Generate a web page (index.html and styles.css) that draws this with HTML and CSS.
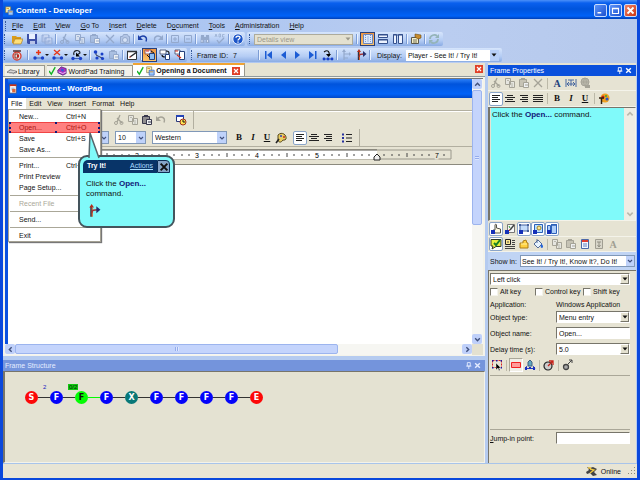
FILE: index.html
```html
<!DOCTYPE html>
<html lang="en">
<head>
<meta charset="utf-8">
<title>Content - Developer</title>
<link rel="stylesheet" href="styles.css">
</head>
<body>
<svg class="sprite" aria-hidden="true">
<defs>
<symbol id="open" viewBox="0 0 12 12"><path d="M1 3h4l1 1h4v2H4L2 10H1z" fill="#d99c1c"/><path d="M4 6h8l-2 5H2z" fill="#ffe07a" stroke="#a87410" stroke-width=".6"/></symbol>
<symbol id="save" viewBox="0 0 12 12"><path d="M1 1h10v10H2l-1-1z" fill="#3c50a8"/><path d="M3 1h6v5H3z" fill="#e8f0ff"/><path d="M4 8h5v3H4z" fill="#b8c4e8"/></symbol>
<symbol id="saveall" viewBox="0 0 12 12"><path d="M1 2h7v7H1zM4 5h7v6H4z" fill="#b4c6ea" stroke="#8fa8d4" stroke-width=".8"/><path d="M3 3h4M6 6h4" stroke="#dbe6fa"/></symbol>
<symbol id="cut" viewBox="0 0 12 12"><path d="M7 1L4 8M4 4l5 5" fill="none" stroke="currentColor" stroke-width="1.3"/><circle cx="3" cy="9" r="1.5" fill="none" stroke="currentColor"/><circle cx="8.500" cy="9" r="1.500" fill="none" stroke="currentColor"/></symbol>
<symbol id="copy" viewBox="0 0 12 12"><path d="M1.500 1.500h5v6h-5zM5.500 4.500h5v6h-5z" fill="#e6e8ea" fill-opacity=".6" stroke="currentColor"/><path d="M7 7h2M7 9h2M3 3.500h2" stroke="currentColor" stroke-width=".7"/></symbol>
<symbol id="paste" viewBox="0 0 12 12"><path d="M1.500 2.500h7v7h-7z" fill="currentColor" fill-opacity=".5" stroke="currentColor"/><path d="M3 1h4v2H3z" fill="currentColor"/><path d="M5.500 5.500h5v5h-5z" fill="#eef0f2" stroke="currentColor"/><path d="M7 8h3" stroke="currentColor"/></symbol>
<symbol id="del" viewBox="0 0 12 12"><path d="M2 2l8 8M10 2l-8 8" stroke="currentColor" stroke-width="1.300"/></symbol>
<symbol id="camera" viewBox="0 0 12 12"><path d="M1.500 3.500h2l1-2h4l1 2h1v7h-9z" fill="#b4c6e6" stroke="currentColor"/><circle cx="6" cy="7" r="2.500" fill="#d5e2f6" stroke="currentColor"/></symbol>
<symbol id="undo" viewBox="0 0 12 12"><path d="M2 5.500C5 1 11 3 9 8.500" fill="none" stroke="currentColor" stroke-width="1.400"/><path d="M1 2v5h5z" fill="currentColor"/></symbol>
<symbol id="redo" viewBox="0 0 12 12"><path d="M10 5.500C7 1 1 3 3 8.500" fill="none" stroke="currentColor" stroke-width="1.400"/><path d="M11 2v5H6z" fill="currentColor"/></symbol>
<symbol id="plus" viewBox="0 0 12 12"><path d="M2.500 2.500h7v7h-7zM4 6h4M6 4v4" fill="none" stroke="currentColor"/></symbol>
<symbol id="minus" viewBox="0 0 12 12"><path d="M2.500 2.500h7v7h-7zM4 6h4" fill="none" stroke="currentColor"/></symbol>
<symbol id="find" viewBox="0 0 12 12"><path d="M2 2h3l.5 8h-4zM7 2h3l.5 8h-4zM5 4h2v3H5z" fill="currentColor"/><path d="M3 7v2M8.500 7v2" stroke="#d8e4f8"/></symbol>
<symbol id="spell" viewBox="0 0 12 12"><path d="M1 4l1-3 1 3M5 1v3h1.500V1zM10.500 1.500h-2V4h2" fill="none" stroke="currentColor" stroke-width=".7"/><path d="M3 7l2 3 5-5" fill="none" stroke="currentColor" stroke-width="1.300"/></symbol>
<symbol id="help" viewBox="0 0 12 12"><circle cx="6" cy="6" r="5.200" fill="#1e56c8" stroke="#e6eefc"/><path d="M4 4.800C4 2.500 8 2.500 8 4.600 8 6 6 6 6 7.500M6 8.500v1.200" fill="none" stroke="#fff" stroke-width="1.300"/></symbol>
<symbol id="lay1" viewBox="0 0 12 12"><path d="M1.500 1.500h9v9h-9z" fill="#dce9fb" stroke="#6c86bc"/><path d="M3.500 2v8M8.500 2v8" stroke="#7c98d0" stroke-dasharray="1 1"/><path d="M5 4h2M5 6h2M5 8h2" stroke="#9cb4e0"/></symbol>
<symbol id="lay2" viewBox="0 0 12 12"><path d="M1.500 1.500h9v3h-9zM1.500 6.500h9v4h-9z" fill="#edf3ff" stroke="#34508c"/><path d="M1 2h10M1 7h10" stroke="#34508c"/></symbol>
<symbol id="lay3" viewBox="0 0 12 12"><path d="M1.500 1.500h3v9h-3zM6.500 1.500h4v9h-4z" fill="#edf3ff" stroke="#34508c"/><path d="M1 2h10" stroke="#34508c"/></symbol>
<symbol id="props" viewBox="0 0 12 12"><path d="M1.500 4.500h7v6h-7z" fill="#f4efc9" stroke="#5b594c"/><path d="M3 7h4M3 9h4" stroke="#77745c"/><path d="M5 1l6 1v3l-3 1-3-2z" fill="#c78c2c" stroke="#6e4a10" stroke-width=".6"/></symbol>
<symbol id="refresh" viewBox="0 0 12 12"><path d="M2 6c0-4 5-5 7-3M10 6c0 4-5 5-7 3" fill="none" stroke="#94b4b8" stroke-width="1.800"/><path d="M11 1v4H7zM1 11V7h4z" fill="#94b4b8"/></symbol>
<symbol id="record" viewBox="0 0 12 12"><circle cx="6" cy="7" r="4" fill="#f4dcd8" stroke="#d43c30" stroke-width="1.300"/><path d="M2 2h8" stroke="#5a302c" stroke-width="1.500"/><path d="M4 5h3v4H4z" fill="none" stroke="#7a302c"/><circle cx="7" cy="7" r="1.200" fill="#c41c14"/></symbol>
<symbol id="nodeadd" viewBox="0 0 12 12"><path d="M2 9h8" stroke="#3c64b4"/><circle cx="2" cy="9" r="1.700" fill="#1940c8"/><circle cx="9.500" cy="9" r="1.700" fill="#1940c8"/><path d="M5.500 1v5M3 3.500h5" stroke="#e83414" stroke-width="1.500"/></symbol>
<symbol id="nodedel" viewBox="0 0 12 12"><path d="M2 9h8" stroke="#3c64b4"/><circle cx="2" cy="9" r="1.700" fill="#1940c8"/><circle cx="9.500" cy="9" r="1.700" fill="#1940c8"/><path d="M2 1l6 5M8 1L2 6" stroke="#e83414" stroke-width="1.300"/></symbol>
<symbol id="nodeturn" viewBox="0 0 12 12"><path d="M2 9.500h8" stroke="#3c64b4"/><circle cx="2" cy="9.500" r="1.700" fill="#1940c8"/><circle cx="9.500" cy="9.500" r="1.700" fill="#1940c8"/><path d="M3 6C1 1 9 0 9 4L6 6" fill="none" stroke="#20252c" stroke-width="1.200"/><path d="M5 3.500v4h4z"/></symbol>
<symbol id="nodes" viewBox="0 0 12 12"><path d="M3 3v3l6 3" fill="none" stroke="#303a58"/><circle cx="2.500" cy="3" r="1.800" fill="#1940c8"/><circle cx="9" cy="5" r="1.500" fill="#1940c8"/><circle cx="4" cy="9" r="1.600" fill="#1940c8"/><circle cx="9.500" cy="9.500" r="1.600" fill="#1940c8"/></symbol>
<symbol id="edit" viewBox="0 0 12 12"><path d="M1.500 2.500h9v8h-9z" fill="#fff" stroke="#303438"/><path d="M1 2.500h10" stroke="#303438" stroke-width="1.500"/><path d="M11 3L4 8" stroke="#22262e" stroke-width="1.500"/><path d="M3 9l1-2 1 1z" fill="#d83020"/></symbol>
<symbol id="frames" viewBox="0 0 12 12"><path d="M1 1h6v4H1z" fill="#f2f4ff" stroke="#803c30" stroke-width=".8"/><path d="M5.500 4.500h5v6h-5z" fill="#8bbdf4" stroke="#25407c"/><path d="M3 6l3 3M7 2l3 2" stroke="#111"/><path d="M2 2h3" stroke="#e83020"/></symbol>
<symbol id="frames2" viewBox="0 0 12 12"><path d="M1 1h6v4H1z" fill="#fff" stroke="#3c4868" stroke-width=".8"/><path d="M6.500 5.500h4v5h-4z" fill="#fff" stroke="#25407c"/><path d="M7 2c3 0 3 1 3 3M3 6c0 2 1 2 3 2" fill="none" stroke="#111" stroke-width="1.200"/></symbol>
<symbol id="frames3" viewBox="0 0 12 12"><path d="M1 1h5v4H1z" fill="#fff" stroke="#3c4868" stroke-width=".8"/><path d="M5.500 2.500h5v8h-5z" fill="#fff" stroke="#25407c"/><path d="M3 6l4 3M1 2h3" stroke="#d8301c" stroke-width="1.200"/></symbol>
<symbol id="first" viewBox="0 0 12 12"><path d="M3 2h1.500v8H3zM10 2v8L5 6z" fill="#1c5cd4"/></symbol>
<symbol id="prev" viewBox="0 0 12 12"><path d="M9 2v8L4 6z" fill="#1c5cd4"/></symbol>
<symbol id="next" viewBox="0 0 12 12"><path d="M3 2v8l5-4z" fill="#1c5cd4"/></symbol>
<symbol id="last" viewBox="0 0 12 12"><path d="M8 2h1.500v8H8zM2 2v8l5-4z" fill="#1c5cd4"/></symbol>
<symbol id="jump" viewBox="0 0 12 12"><path d="M2 3c4-3 6 0 5 4" fill="none" stroke="#111" stroke-width="1.200"/><path d="M4 5h5L6.500 8z"/><path d="M1 10h10" stroke="#3c64b4"/><circle cx="2" cy="10" r="1.400" fill="#1940c8"/><circle cx="6" cy="10" r="1.400" fill="#1940c8"/><circle cx="10" cy="10" r="1.400" fill="#1940c8"/></symbol>
<symbol id="branch" viewBox="0 0 12 12"><path d="M4 11V2M4 5h6M4 9h4" fill="none" stroke="currentColor" stroke-width="1.200"/><path d="M4 0l2 3H2zM9 3l2 2-2 2z" fill="currentColor"/></symbol>
<symbol id="branch2" viewBox="0 0 12 12"><path d="M3.500 11V2" stroke="#303040" stroke-width="1.400"/><path d="M4.500 11V3" stroke="#d8602c"/><path d="M4 8c0-3 2-3 5-3" fill="none" stroke="#a03030" stroke-width="1.300"/><path d="M4 0l2 3H2z" fill="#b42c1c"/><path d="M8 2l3.500 3L8 8z" fill="#25306c"/></symbol>
<symbol id="book" viewBox="0 0 12 12"><path d="M1 5l4-4 6 2v6l-4 2-6-3z" fill="#b42cc0" stroke="#402868" stroke-width=".8"/><path d="M2 7l5 2 4-2" fill="none" stroke="#e8e0ff"/><path d="M5 3l3 1v3L5 6z" fill="#3060d4"/></symbol>
<symbol id="lib" viewBox="0 0 12 12"><path d="M0 7l4-3 8 2v2L8 10 0 8z" fill="#6c6c6c"/><path d="M1 7l3-2 7 1-3 2z" fill="#d5d5d5"/><path d="M1 8l7 1.500L11 8" stroke="#fff" fill="none" stroke-width=".7"/></symbol>
<symbol id="tick" viewBox="2 0 9 12"><path d="M2 6l3 4 5-9" fill="none" stroke="#18b428" stroke-width="1.800"/></symbol>
<symbol id="docicon" viewBox="0 0 12 12"><path d="M2 1h6v7H2z" fill="#fff4b0" stroke="#7c7448" stroke-width=".8"/><path d="M5 5h6v6H5z" fill="#9ccaff" stroke="#2050a8" stroke-width=".8"/><path d="M3 3h3M6 7h4" stroke="#d48c20"/></symbol>
<symbol id="pad" viewBox="0 0 12 12"><path d="M2 1h8v10H2z" fill="#fff" stroke="#3c5080"/><path d="M2 1.500h8" stroke="#c83018" stroke-width="2"/><path d="M4 5h4M4 7h4" stroke="#6884bc"/><path d="M5 6h4v4H5z" fill="#e06834"/></symbol>
<symbol id="clock" viewBox="0 0 12 12"><path d="M1.500 1.500h7v6h-7z" fill="#fff" stroke="#28387c"/><path d="M1 2h8" stroke="#2444b8" stroke-width="2"/><circle cx="8" cy="8" r="3" fill="#ffe450" stroke="#a0301c"/><path d="M8 6v2h2" fill="none" stroke="#111"/></symbol>
<symbol id="left" viewBox="0 0 12 12"><path d="M2 2.500h8M2 4.500h6M2 6.500h8M2 8.500h6" stroke="#222"/></symbol>
<symbol id="center" viewBox="0 0 12 12"><path d="M3 2.500h6M1 4.500h10M3 6.500h6M1 8.500h10" stroke="#222"/></symbol>
<symbol id="right" viewBox="0 0 12 12"><path d="M2 2.500h8M4 4.500h6M2 6.500h8M4 8.500h6" stroke="#222"/></symbol>
<symbol id="justify" viewBox="0 0 12 12"><path d="M1 2.500h10M1 4.500h10M1 6.500h10M1 8.500h10" stroke="#222"/></symbol>
<symbol id="bullets" viewBox="0 0 12 12"><path d="M5 2.500h6M5 6h6M5 9.500h6" stroke="#222"/><path d="M1 1.500h2v2H1zM1 5h2v2H1zM1 8.500h2v2H1z" fill="#2430a0"/></symbol>
<symbol id="palette" viewBox="0 0 12 12"><path d="M3 3C7-1 12 3 11 7c-1 2-3 0-4 2s-4 1-4-1z" fill="#e8cc60" stroke="#55481c"/><circle cx="6" cy="4" r="1" fill="#2c40c0"/><circle cx="9" cy="5" r="1" fill="#c82c20"/><path d="M1 11l3-4" stroke="#222" stroke-width="1.500"/></symbol>
<symbol id="globe" viewBox="0 0 12 12"><circle cx="6" cy="5" r="4" fill="#b8b6aa" stroke="currentColor"/><path d="M2 5h8M6 1c-2 3-2 5 0 8 2-3 2-5 0-8" fill="none" stroke="currentColor" stroke-width=".7"/><path d="M6 8h5v3H6z" fill="currentColor"/></symbol>
<symbol id="spacing" viewBox="0 0 12 12"><path d="M1 2v8M11 2v8M3 3h6M6 3v6M2 7h8M4 5L2 7l2 2M8 5l2 2-2 2" fill="none" stroke="#4868a0"/></symbol>
<symbol id="fun" viewBox="0 0 12 12"><circle cx="7" cy="5" r="4.500" fill="#f0a020"/><circle cx="5" cy="4" r="1.500" fill="#c82018"/><circle cx="9" cy="6" r="1.500" fill="#2858cc"/><circle cx="8" cy="3" r="1" fill="#38a830"/><path d="M1 5h5M3.500 5v6" stroke="#302010" stroke-width="1.500"/></symbol>
<symbol id="hand" viewBox="0 0 12 12"><path d="M5 7V2c0-1 1.500-1 1.500 0v3l4 1v4H5L3 7z" fill="#fffbe0" stroke="#55544c"/><path d="M1 7h4v4H1z" fill="#1430b8"/></symbol>
<symbol id="pen" viewBox="0 0 12 12"><path d="M3.500 1.500h7v8h-7z" fill="#f8f8f8" stroke="#777"/><path d="M10 2L6 7" stroke="#444" stroke-width="1.500"/><path d="M4 8l2-2v2z" fill="#d03c20"/><path d="M5 3l1 2" stroke="#30a030"/><path d="M1 7h4v4H1z" fill="#1430b8"/></symbol>
<symbol id="bubble" viewBox="0 0 12 12"><path d="M2 2h8v6H2z" fill="#c4dcfa" stroke="#44609c"/><path d="M1 1h2v2H1zM9 1h2v2H9zM9 7h2v2H9z" fill="#44609c"/><path d="M1 7h4v4H1z" fill="#1430b8"/></symbol>
<symbol id="view" viewBox="0 0 12 12"><path d="M2.500 1.500h8v8h-8z" fill="#b8e0ff" stroke="#2c60b8"/><circle cx="7" cy="5" r="2" fill="#ffe890" stroke="#a08028"/><path d="M1 7h4v4H1z" fill="#1430b8"/></symbol>
<symbol id="window" viewBox="0 0 12 12"><path d="M1.500 2.500h3v5h-3zM5.500 1.500h5v9h-5z" fill="#b0cef8" stroke="#2c60b8"/><path d="M5 2h6" stroke="#2c60b8" stroke-width="1.500"/><path d="M1 7h4v4H1z" fill="#1430b8"/></symbol>
<symbol id="say" viewBox="0 0 12 12"><path d="M1 1.500h10v7H6L2 11l1-3H1z" fill="#e8f03c" stroke="#303c28"/><path d="M4 5l2 2 4-5" fill="none" stroke="#168028" stroke-width="2"/></symbol>
<symbol id="text" viewBox="0 0 12 12"><path d="M1.500 1.500h5v5h-5z" fill="#ffe890" stroke="#222"/><path d="M3 4h2M8 2.500h3M8 4.500h3M8 6.500h3M1 8.500h10M1 10.500h10" stroke="#444"/></symbol>
<symbol id="folder" viewBox="0 0 12 12"><path d="M2 5h3V3l3-1 1 3h1v5H2z" fill="#ffd040" stroke="#ac7c18"/><path d="M3 6h6" stroke="#fff0a0"/></symbol>
<symbol id="fill" viewBox="0 0 12 12"><path d="M2 6l4-4 4 4-4 4z" fill="#e8f4ff" stroke="#546c98"/><path d="M9 6c3 1 2 4 1 4S8 9 9 6z" fill="#2464d8"/><path d="M5 5V1" stroke="#546c98"/></symbol>
<symbol id="sheet" viewBox="0 0 12 12"><path d="M2.500 1.500h7v9h-7z" fill="#f5f7ff" stroke="#4c68a8"/><path d="M3 3h6" stroke="#e03c30" stroke-width="2"/><path d="M4 6h4M4 8h4" stroke="#6080c0"/></symbol>
<symbol id="graysheet" viewBox="0 0 12 12"><path d="M2.500 1.500h7v9h-7z" fill="#d8d6ca" stroke="#a09e92"/><path d="M4 4h4M6 4v5M4.500 7L6 9l1.500-2" fill="none" stroke="#929084"/></symbol>
<symbol id="areasel" viewBox="0 0 12 12"><path d="M1.500 1.500h9v7h-9z" fill="none" stroke="#d82020" stroke-dasharray="2 1"/><path d="M1 1h1.500v1.500H1zM5 1h1.500v1.500H5zM9.500 1H11v1.500H9.500zM1 8h1.500v1.500H1zM9.500 8H11v1.500H9.500z" fill="#1818a0"/><path d="M5 4v7l2-2 1 3 1-1-1-2h2z" stroke="#fff" stroke-width=".4"/></symbol>
<symbol id="redbox" viewBox="0 0 12 12"><path d="M1.500 3.500h9v5h-9z" fill="#ff9c98" stroke="#f02020"/></symbol>
<symbol id="mouse" viewBox="0 0 12 12"><path d="M4 7V3l2-2 2 2v4z" fill="#60a8c0" stroke="#406080"/><path d="M1.500 9.500h9M3 7L1 10M9 7l2 3" stroke="#2440b8"/><path d="M1 8h2v3H1zM9 8h2v3H9zM5 8h2v2H5z" fill="#1c30c0"/></symbol>
<symbol id="target" viewBox="0 0 12 12"><circle cx="5" cy="7" r="4" fill="#ccc" stroke="#222" stroke-width="1.200"/><path d="M5 7l5-5M6 2h4v4" fill="none" stroke="#c82018" stroke-width="1.300"/></symbol>
<symbol id="sound" viewBox="0 0 12 12"><circle cx="4" cy="8" r="2.500" fill="#aaa" stroke="#444" stroke-width="1.300"/><path d="M6 5l4-4M7 1h3v3" fill="none" stroke="#444"/></symbol>
<symbol id="plug" viewBox="0 0 12 12"><path d="M1 2l3 1 3-1 4 2-3 3 3 3-4 1-3-3-3 1-1-2 3-2z" fill="#444"/><path d="M4 4l4 1-4 3M2 3h3" fill="none" stroke="#f0c840" stroke-width="1.300"/></symbol>
<symbol id="x" viewBox="0 0 12 12"><path d="M2 2l8 8M10 2l-8 8" stroke="currentColor" stroke-width="2.400"/></symbol>
<symbol id="pin" viewBox="0 0 12 12"><path d="M4 1h5v6H4zM2 7h9M6.500 7v5" fill="none" stroke="currentColor" stroke-width="1.500"/></symbol>
<symbol id="down" viewBox="0 0 12 12"><path d="M1 3h10L6 9z" fill="currentColor"/></symbol>
<symbol id="chev" viewBox="0 0 12 12"><path d="M2 4l4 4 4-4" fill="none" stroke="currentColor" stroke-width="2.400"/></symbol>
</defs>
</svg>

<div class="window">
<header class="titlebar">
  <svg class="ic"><use href="#docicon"/></svg>
  <h1>Content - Developer</h1>
  <button class="cap" aria-label="Minimize"><svg viewBox="0 0 12 12"><path d="M2 9h5" stroke="#fff" stroke-width="2"/></svg></button>
  <button class="cap" aria-label="Maximize"><svg viewBox="0 0 12 12"><path d="M2 3h8v7H2zM2 3.500h8" fill="none" stroke="#fff" stroke-width="1.500"/></svg></button>
  <button class="cap close" aria-label="Close"><svg><use href="#x"/></svg></button>
</header>

<div class="chrome">
  <nav class="menubar grip">
    <a href="#"><u>F</u>ile</a><a href="#"><u>E</u>dit</a><a href="#"><u>V</u>iew</a><a href="#"><u>G</u>o To</a><a href="#"><u>I</u>nsert</a><a href="#"><u>D</u>elete</a><a href="#">D<u>o</u>cument</a><a href="#"><u>T</u>ools</a><a href="#"><u>A</u>dministration</a><a href="#"><u>H</u>elp</a>
  </nav>
  <div class="bars">
    <div class="bar grip">
      <button aria-label="Open"><svg><use href="#open"/></svg></button><button aria-label="Save"><svg><use href="#save"/></svg></button><button class="dim" aria-label="Save all"><svg><use href="#saveall"/></svg></button><i class="sep"></i>
      <button class="dim" aria-label="Cut"><svg><use href="#cut"/></svg></button><button class="dim" aria-label="Copy"><svg><use href="#copy"/></svg></button><button class="dim" aria-label="Paste"><svg><use href="#paste"/></svg></button><button class="dim" aria-label="Delete"><svg><use href="#del"/></svg></button><button class="dim" aria-label="Capture"><svg><use href="#camera"/></svg></button><i class="sep"></i>
      <button class="blue" aria-label="Undo"><svg><use href="#undo"/></svg></button><button class="dim" aria-label="Redo"><svg><use href="#redo"/></svg></button><i class="sep"></i>
      <button class="dim slim" aria-label="Expand"><svg><use href="#plus"/></svg></button><button class="dim slim" aria-label="Collapse"><svg><use href="#minus"/></svg></button><i class="sep"></i>
      <button class="dim" aria-label="Find"><svg><use href="#find"/></svg></button><button class="dim" aria-label="Spelling"><svg><use href="#spell"/></svg></button><i class="sep"></i>
      <button aria-label="Help"><svg><use href="#help"/></svg></button>
    </div>
    <div class="bar grip second">
      <div class="combo details"><select aria-label="View mode" disabled><option>Details view</option></select><span><svg><use href="#down"/></svg></span></div><i class="sep wide"></i>
      <button class="hot" aria-label="Standard layout"><svg><use href="#lay1"/></svg></button><button aria-label="Stacked layout"><svg><use href="#lay2"/></svg></button><button aria-label="Side layout"><svg><use href="#lay3"/></svg></button><i class="sep"></i>
      <button aria-label="Properties"><svg><use href="#props"/></svg></button><i class="sep"></i>
      <button class="dim" aria-label="Refresh"><svg><use href="#refresh"/></svg></button>
    </div>
  </div>
  <div class="bars">
    <div class="bar grip">
      <button aria-label="Record"><svg><use href="#record"/></svg></button><i class="sep wide"></i>
      <button class="drop" aria-label="Insert frame"><svg><use href="#nodeadd"/></svg><b></b></button><button class="drop" aria-label="Delete frame"><svg><use href="#nodedel"/></svg><b></b></button><button class="drop" aria-label="Recapture"><svg><use href="#nodeturn"/></svg><b></b></button><i class="sep"></i>
      <button aria-label="Insert nodes"><svg><use href="#nodes"/></svg></button><button class="dim" aria-label="Paste frame"><svg><use href="#paste"/></svg></button><i class="sep"></i>
      <button aria-label="Edit screenshot"><svg><use href="#edit"/></svg></button><i class="sep"></i>
      <button class="hot" aria-label="Link bubble"><svg><use href="#frames"/></svg></button><button aria-label="Link action"><svg><use href="#frames2"/></svg></button><button aria-label="Unlink"><svg><use href="#frames3"/></svg></button>
    </div>
    <div class="bar grip nav">
      <span class="fid">Frame ID:</span><output>7</output><i class="sep"></i>
      <button aria-label="First frame"><svg><use href="#first"/></svg></button><button aria-label="Previous frame"><svg><use href="#prev"/></svg></button><button aria-label="Next frame"><svg><use href="#next"/></svg></button><button aria-label="Last frame"><svg><use href="#last"/></svg></button><button aria-label="Jump to frame"><svg><use href="#jump"/></svg></button><i class="sep"></i>
      <button class="dim" aria-label="Previous path"><svg><use href="#branch"/></svg></button><button aria-label="Next path"><svg><use href="#branch2"/></svg></button><i class="sep"></i>
      <label for="display">Display:</label>
      <div class="combo display"><select id="display"><option>Player - See It! / Try It!</option></select><span><svg><use href="#down"/></svg></span></div>
    </div>
  </div>
</div>

<main class="work">
  <div class="leftcol">
    <nav class="tabs">
      <a href="#" class="tab lib"><svg><use href="#lib"/></svg>Library</a>
      <a href="#" class="tab"><svg class="tick"><use href="#tick"/></svg><svg><use href="#book"/></svg>WordPad Training</a>
      <a href="#" class="tab on"><svg class="tick"><use href="#tick"/></svg><svg><use href="#docicon"/></svg>Opening a Document<span class="red"><svg><use href="#x"/></svg></span></a>
      <button class="red end" aria-label="Close tab"><svg><use href="#x"/></svg></button>
    </nav>
    <section class="canvas">
      <div class="canvasrow">
        <div class="wordpad">
          <div class="wptitle"><svg class="ic"><use href="#pad"/></svg>Document - WordPad</div>
          <nav class="wpmenu"><a href="#" class="on">File</a><a href="#">Edit</a><a href="#">View</a><a href="#">Insert</a><a href="#">Format</a><a href="#">Help</a></nav>
          <div class="wpbar">
            <button class="gray" aria-label="Cut"><svg><use href="#cut"/></svg></button><button class="gray" aria-label="Copy"><svg><use href="#copy"/></svg></button><button class="dark" aria-label="Paste"><svg><use href="#paste"/></svg></button><button class="gray" aria-label="Undo"><svg><use href="#undo"/></svg></button><button class="date" aria-label="Date and time"><svg><use href="#clock"/></svg></button><i class="edge"></i>
          </div>
          <div class="wpfmt">
            <div class="combo xp font"><select aria-label="Font"><option></option></select><span><svg><use href="#chev"/></svg></span></div>
            <div class="combo xp size"><select aria-label="Font size"><option>10</option></select><span><svg><use href="#chev"/></svg></span></div>
            <div class="combo xp script"><select aria-label="Font script"><option>Western</option></select><span><svg><use href="#chev"/></svg></span></div>
            <div class="tools"><button class="ltr"><b>B</b></button><button class="ltr"><b><em>I</em></b></button><button class="ltr"><b><u>U</u></b></button><button aria-label="Color"><svg><use href="#palette"/></svg></button></div>
            <div class="tools"><button class="press" aria-label="Align left"><svg><use href="#left"/></svg></button><button aria-label="Center"><svg><use href="#center"/></svg></button><button aria-label="Align right"><svg><use href="#right"/></svg></button></div>
            <button aria-label="Bullets"><svg><use href="#bullets"/></svg></button><i class="edge"></i>
          </div>
          <div class="ruler">
            <svg width="444" height="14">
              <defs><pattern id="ticks" width="60" height="14" x="9" patternUnits="userSpaceOnUse"><path d="M7 6v2M15 6v2M22 6v2M30 5v4M37 6v2M45 6v2M52 6v2" stroke="#444"/></pattern></defs>
              <path d="M9 2h434v9H9z" fill="#e6e3d3" stroke="#9a988c"/><path d="M9 2h360v9H9z" fill="#fff"/><path d="M9 2h360" stroke="#55534a"/>
              <path d="M9 0h430v14H9z" fill="url(#ticks)"/>
              <text x="129" y="10">2</text><text x="189" y="10">3</text><text x="249" y="10">4</text><text x="309" y="10">5</text><text x="429" y="10">7</text>
              <path d="M366 12V9l3-3 3 3v3z" fill="#eee" stroke="#222"/>
            </svg>
          </div>
          <div class="page"></div>

          <div class="filemenu">
            <a href="#">New...<span>Ctrl+N</span></a>
            <a href="#" class="sel">Open...<span>Ctrl+O</span><i class="h1"></i><i class="h2"></i><i class="h3"></i><i class="h4"></i><i class="h5"></i><i class="h6"></i><i class="h7"></i><i class="h8"></i></a>
            <a href="#">Save<span>Ctrl+S</span></a>
            <a href="#">Save As...</a><hr>
            <a href="#">Print...<span>Ctrl+P</span></a>
            <a href="#">Print Preview</a>
            <a href="#">Page Setup...</a><hr>
            <a href="#" class="off">Recent File</a><hr>
            <a href="#">Send...</a><hr>
            <a href="#">Exit</a>
          </div>
          <div class="callout">
            <svg class="tail" viewBox="0 0 14 27"><path d="M2 26L3 1l9 25" fill="#80fafa" stroke="#55656c" stroke-width="1.500"/></svg>
            <div class="cohead"><div><strong>Try It!</strong><a href="#">Actions</a></div><button aria-label="Close bubble"><svg><use href="#x"/></svg></button></div>
            <p>Click the <b>Open...</b><br>command.</p>
            <svg class="co"><use href="#branch2"/></svg>
          </div>
        </div>
        <div class="vscroll"><button aria-label="Scroll up"><svg class="up"><use href="#chev"/></svg></button><div class="thumb"></div><div class="track"></div><button aria-label="Scroll down"><svg><use href="#chev"/></svg></button></div>
      </div>
      <div class="hscroll"><button aria-label="Scroll left"><svg class="lt"><use href="#chev"/></svg></button><div class="thumb"></div><div class="track"></div><button aria-label="Scroll right"><svg class="rt"><use href="#chev"/></svg></button><div class="corner"></div></div>
    </section>
    <section class="structure">
      <h2 class="head inactive">Frame Structure<svg><use href="#pin"/></svg><svg><use href="#x"/></svg></h2>
      <div class="struct">
        <ol class="nodes">
          <li class="end">S</li><li>F<sup>2</sup></li><li class="cur">F<sup>0/2</sup></li><li class="green">F</li><li class="x">X</li><li>F</li><li>F</li><li>F</li><li>F</li><li class="end">E</li>
        </ol>
      </div>
    </section>
  </div>

  <aside class="props">
    <h2 class="head">Frame Properties<svg><use href="#pin"/></svg><svg><use href="#x"/></svg></h2>
    <div class="ptool">
      <button class="gray" aria-label="Cut"><svg><use href="#cut"/></svg></button><button class="gray" aria-label="Copy"><svg><use href="#copy"/></svg></button><button class="gray" aria-label="Paste"><svg><use href="#paste"/></svg></button><button class="gray" aria-label="Delete"><svg><use href="#del"/></svg></button><i class="psep"></i><button class="ltr font"><b>A</b></button><button aria-label="Text width"><svg><use href="#spacing"/></svg></button><button class="gray" aria-label="Hyperlink"><svg><use href="#globe"/></svg></button>
    </div>
    <div class="ptool tall">
      <button class="press" aria-label="Align left"><svg><use href="#left"/></svg></button><button aria-label="Center"><svg><use href="#center"/></svg></button><button aria-label="Align right"><svg><use href="#right"/></svg></button><button aria-label="Justify"><svg><use href="#justify"/></svg></button><i class="psep"></i><button class="ltr"><b>B</b></button><button class="ltr"><b><em>I</em></b></button><button class="ltr"><b><u>U</u></b></button><i class="psep"></i><button aria-label="Text effects"><svg><use href="#fun"/></svg></button>
    </div>
    <div class="editor">
      <div class="text" contenteditable="true" role="textbox" aria-label="Bubble text">Click the <b>Open...</b> command.</div>
      <div class="escroll"><svg class="up"><use href="#chev"/></svg><svg><use href="#chev"/></svg></div>
    </div>
    <div class="ptool tall">
      <button class="press" aria-label="Action text"><svg><use href="#hand"/></svg></button><button aria-label="Custom text"><svg><use href="#pen"/></svg></button><button class="press" aria-label="Template text"><svg><use href="#bubble"/></svg></button><button class="press" aria-label="Show text"><svg><use href="#view"/></svg></button><button class="press" aria-label="Window text"><svg><use href="#window"/></svg></button>
    </div>
    <div class="ptool">
      <button class="press" aria-label="Bubble"><svg><use href="#say"/></svg></button><button aria-label="Bubble position"><svg><use href="#text"/></svg></button><button aria-label="Bubble pointer"><svg><use href="#folder"/></svg></button><button aria-label="Fill color"><svg><use href="#fill"/></svg></button><i class="psep"></i><button class="gray" aria-label="Copy bubble"><svg><use href="#copy"/></svg></button><button class="gray" aria-label="Bubble options"><svg><use href="#paste"/></svg></button><button aria-label="Note"><svg><use href="#sheet"/></svg></button><button aria-label="Import"><svg><use href="#graysheet"/></svg></button><button class="ltr gray font"><b>A</b></button>
    </div>
    <div class="showin"><label for="show">Show in:</label><div class="combo xp"><select id="show"><option>See It! / Try It!, Know It?, Do It!</option></select><span><svg><use href="#chev"/></svg></span></div></div>
    <form class="form">
      <div class="combo classic"><select aria-label="Action"><option>Left click</option></select><span><svg><use href="#down"/></svg></span></div>
      <div class="checks"><label><input type="checkbox">Alt key</label><label><input type="checkbox">Control key</label><label><input type="checkbox">Shift key</label></div>
      <div class="row app"><span>Application:</span><span>Windows Application</span></div>
      <div class="row"><label for="otype">Object type:</label><div class="combo classic"><select id="otype"><option>Menu entry</option></select><span><svg><use href="#down"/></svg></span></div></div>
      <div class="row mid"><label for="oname">Object name:</label><input id="oname" type="text" value="Open..."></div>
      <div class="row"><label for="delay">Delay time (s):</label><div class="combo classic"><select id="delay"><option>5.0</option></select><span><svg><use href="#down"/></svg></span></div></div>
      <div class="acts"><button type="button" aria-label="Action area"><svg><use href="#areasel"/></svg></button><i class="psep"></i><button type="button" class="sunk" aria-label="Show area"><svg><use href="#redbox"/></svg></button><button type="button" aria-label="Mouse path"><svg><use href="#mouse"/></svg></button><i class="psep"></i><button type="button" aria-label="Show action"><svg><use href="#target"/></svg></button><i class="psep"></i><button type="button" aria-label="Drag"><svg><use href="#sound"/></svg></button></div>
      <div class="space"></div>
      <div class="row jump"><label for="jump-in"><u>J</u>ump-in point:</label><input id="jump-in" type="text"></div>
    </form>
  </aside>
</main>
<footer class="status"><svg class="ic"><use href="#plug"/></svg><span>Online</span><svg class="sizer" viewBox="0 0 8 8"><path d="M6 0h1v1H6zM3 3h1v1H3zM6 3h1v1H6zM0 6h1v1H0zM3 6h1v1H3zM6 6h1v1H6z" fill="#8c8a78"/></svg></footer>
</div>
</body>
</html>
```
FILE: styles.css
```css
* { box-sizing: border-box; }
html, body { height: 100%; }
body {
  margin: 0;
  font: 7px/9px "Liberation Sans", sans-serif;
  color: #111;
}
a { color: inherit; text-decoration: none; }
u { text-decoration-thickness: 1px; text-underline-offset: 1px; }
h1, h2, p, ol { margin: 0; padding: 0; font: inherit; }
button, input, select { font: inherit; color: inherit; margin: 0; }
button {
  display: flex;
  flex: none;
  align-items: center;
  justify-content: center;
  padding: 0;
  border: 0;
  background: none;
}
svg { display: block; flex: none; width: 12px; height: 12px; }
.sprite { position: absolute; width: 0; height: 0; }

.window {
  display: flex;
  flex-direction: column;
  min-height: 100%;
  border: solid #0a48dc;
  border-width: 0 3px 2px;
  background: #b5cbf0;
}
.titlebar {
  display: flex;
  align-items: center;
  gap: 2px;
  height: 19px;
  padding: 2px 0 0 1px;
  background: linear-gradient(#4c90f8 0, #0a60ee 3px, #0054dc 9px, #0062f8 16px, #0040b8);
  color: #fff;
}
.titlebar .ic { width: 10px; height: 10px; }
h1 { flex: 1; font: bold 8px/10px "Liberation Sans", sans-serif; }
.cap {
  width: 13px;
  height: 13px;
  border: 1px solid #c8dcff;
  border-radius: 2px;
  background: linear-gradient(135deg, #5c94f8, #1c50d0);
}
.cap.close { background: linear-gradient(135deg, #f08468, #cc3410); }
.cap svg { width: 9px; height: 9px; }

.chrome { padding: 0 2px 0 1px; background: linear-gradient(90deg, #a2c0f2, #bacdf0 70%, #b6c9ec); height: 44px; }
.grip::before {
  content: "";
  width: 1px;
  height: 10px;
  flex: none;
  border-left: 1px dotted #34589c;
  margin-right: 3px;
}
.menubar { display: flex; align-items: center; height: 13px; padding-left: 1px; }
.menubar a { margin-right: 10px; }
.menubar a:first-of-type { margin-left: 2px; }
.bars { display: flex; margin-bottom: 1px; height: 15px; }
.bar {
  display: flex;
  align-items: center;
  height: 14px;
  border-radius: 2px;
  background: linear-gradient(#d6e5fc, #b4ccf4 60%, #8aace4);
}
.bar button { width: 15px; height: 14px; color: #333; }
.bar .slim { width: 13px; }
.bar .dim { color: #94a9cc; }
.bar .blue { color: #1c40a8; }
.bar .hot { height: 14px; border: 1px solid #28407c; background: linear-gradient(#ee9440, #fcc468); }
.sep { width: 1px; height: 10px; margin: 0 1px; background: #7c9cd4; box-shadow: 1px 0 #eaf2ff; flex: none; }
.sep.wide { margin: 0 3px; }
.bar.second { margin-left: 2px; padding: 0 2px; }
.bar .drop { width: 19px; }
.drop b { border: 2px solid transparent; border-top-color: #111; border-bottom: 0; }
.fid { width: 36px; margin-left: 1px; }
output { width: 24px; }
.bar.nav { margin-left: 3px; padding: 0 3px 0 1px; }
.nav label { margin: 0 4px 0 6px; }

.combo { display: flex; height: 11px; background: #fff; }
.combo select {
  flex: 1;
  min-width: 0;
  appearance: none;
  border: 0;
  padding: 0 2px;
  background: none;
  border-radius: 0;
}
.combo span { display: flex; align-items: center; justify-content: center; width: 9px; background: #b8d0f8; }
.combo span svg { width: 6px; height: 6px; }
.combo.details { width: 99px; border: 1px solid #adab9c; background: #e4e1d0; color: #9a988a; }
.combo.details select { color: #9a988a; opacity: 1; }
.combo.details span { background: none; }
.combo.display { width: 93px; }
.combo.xp { border: 1px solid #8098b8; }
.combo.xp span { background: #bfd2fa; color: #40507c; }
.combo.classic { height: 12px; border: 1px solid; border-color: #77756a #fff #fff #77756a; }
.combo.classic span { background: #e4e1d0; border: 1px solid; border-color: #fff #77756a #77756a #fff; }

.work { display: flex; flex: 1; gap: 3px; }
.leftcol { flex: 1; min-width: 0; display: flex; flex-direction: column; }
.tabs {
  display: flex;
  align-items: flex-end;
  height: 14px;
  padding: 2px 0 0 2px;
  background: #e6e3d2;
  border-bottom: 1px solid #8e9aa0;
}
.tab {
  display: flex;
  align-items: center;
  gap: 1px;
  height: 11px;
  padding: 0 8px 0 2px;
  margin-right: 2px;
  border: solid #9a988c;
  border-width: 1px 1px 0 0;
  background: #f2f1ea;
}
.tab svg { width: 10px; height: 10px; }
.tab .tick { width: 7px; }
.tab.lib { padding-right: 5px; }
.tab.on { height: 13px; margin-left: -2px; padding: 0 4px; border-top: 2px solid #f0a434; background: #fff; font-weight: bold; }
.red {
  display: flex;
  align-items: center;
  justify-content: center;
  width: 8px;
  height: 8px;
  margin-left: 4px;
  background: #e04028;
  color: #fff;
}
.red svg { width: 6px; height: 6px; }
.red.end { margin: 0 2px 3px auto; }

.canvas { flex: 1; display: flex; flex-direction: column; border: solid #f4f3ea; border-width: 1px 2px; background: #e4e1d0; }
.canvasrow { flex: 1; display: flex; border-top: 1px solid #777; }
.wordpad {
  position: relative;
  flex: 1;
  display: flex;
  flex-direction: column;
  border-left: 3px solid #0a50e0;
  background: #e6e3d3;
}
.wptitle {
  display: flex;
  align-items: center;
  gap: 3px;
  height: 19px;
  color: #fff;
  font-size: 8px;
  font-weight: bold;
  background: linear-gradient(#2c80f8, #0054dc 5px, #0062f8 15px, #0048c8);
}
.wptitle .ic { width: 10px; height: 10px; }
.wpmenu { display: flex; height: 12px; }
.wpmenu a { padding: 1px 3px; }
.wpmenu .on { background: #fff; padding-right: 4px; }
.wpbar { display: flex; align-items: center; height: 19px; padding-left: 104px; border-top: 1px solid #b2afa0; box-shadow: inset 0 1px #fff; }
.wpbar button { width: 14px; height: 14px; }
.gray { color: #a5a397; }
.dark { color: #38384c; }
.wpbar .date { margin-left: 6px; }
.edge { align-self: stretch; width: 1px; margin-left: 5px; background: #b2afa0; }
.wpfmt { display: flex; align-items: center; height: 18px; border-bottom: 1px solid #b2afa0; }
.wpfmt button { width: 14px; height: 14px; }
.wpfmt .combo { height: 13px; }
.wpfmt .font { width: 101px; margin-right: 6px; }
.wpfmt .size { width: 31px; margin-right: 6px; }
.wpfmt .script { width: 75px; margin-right: 5px; }
.tools { display: flex; margin-right: 5px; }
.press { border: 1px solid #8aa4c8; border-radius: 2px; background: #fff; }
.press svg { width: 12px; height: 12px; }
.ltr { font: bold 9px/11px "Liberation Serif", serif; }
.ltr.font { font-size: 10px; color: #20407c; }
.ltr.gray { color: #a09e92; }
.ruler { height: 18px; padding-top: 1px; border-bottom: 1px solid #8c8a7e; }
.ruler svg { width: 444px; height: 14px; }
.ruler text { font-size: 7px; text-anchor: middle; stroke: #fff; stroke-width: 3px; paint-order: stroke; }
.ruler text:last-of-type { stroke: #e6e3d3; }
.page { flex: 1; background: #fff; }

.filemenu {
  position: absolute;
  left: 0;
  top: 30px;
  width: 93px;
  padding-top: 1px;
  border: 1px solid #a5a294;
  background: #fff;
  box-shadow: 1px 1px 1px #777;
}
.filemenu a { display: flex; justify-content: space-between; height: 11px; padding: 1px 9px 0 10px; position: relative; }
.filemenu span { width: 25px; }
.filemenu hr { height: 1px; margin: 2px 1px; border: 0; background: #aaa798; }
.filemenu .off { color: #aaa798; }
.filemenu .sel { background: #ff8080; color: #a81414; border: 1px solid #f04444; padding: 0 8px 0 9px; }
.sel i { position: absolute; width: 2px; height: 2px; background: #101878; }
.h1, .h4, .h6 { left: -1px; }
.h2, .h7 { left: 45px; }
.h3, .h5, .h8 { right: -1px; }
.h1, .h2, .h3 { top: -1px; }
.h4, .h5 { top: 4px; }
.h6, .h7, .h8 { bottom: -1px; }

.callout {
  position: absolute;
  left: 70px;
  top: 76px;
  width: 97px;
  height: 73px;
  padding: 3px;
  border: 2px solid #44545c;
  border-radius: 9px;
  background: #80fafa;
  font-size: 8px;
  line-height: 10px;
}
.tail { position: absolute; left: 7px; top: -25px; width: 14px; height: 27px; }
.cohead { display: flex; justify-content: space-between; margin-bottom: 6px; }
.cohead div {
  display: flex;
  justify-content: space-between;
  width: 74px;
  padding: 1px 4px;
  border-radius: 5px 0 0 0;
  background: #083468;
  color: #fff;
  font-size: 7px;
}
.cohead a { color: #a8dcff; text-decoration: underline; }
.cohead button { width: 13px; height: 13px; background: #85a4c8; border: 1px solid #0c2c54; border-radius: 0 4px 0 0; }
.cohead button svg { width: 10px; height: 10px; }
.callout p { padding-left: 3px; }
.callout b, .text b { color: #101878; }
.co { width: 14px; height: 14px; margin: 5px 0 0 4px; }

.vscroll { width: 11px; display: flex; flex-direction: column; background: #f6f6f2; }
.vscroll button, .hscroll button { width: 10px; height: 10px; border-radius: 2px; background: #bfd0fa; color: #40507c; }
.vscroll svg, .hscroll svg { width: 7px; height: 7px; }
.up { transform: rotate(180deg); }
.lt { transform: rotate(90deg); }
.rt { transform: rotate(-90deg); }
.thumb { position: relative; border: 1px solid #9cb4ee; border-radius: 2px; background: #c4d4fc; }
.thumb::after { content: ""; width: 4px; height: 4px; position: absolute; left: calc(50% - 2px); top: calc(50% - 2px); background: repeating-linear-gradient(90deg, #94acec 0 1px, #dce6ff 1px 2px); }
.vscroll .thumb { flex: 136; margin: 1px 1px 1px 0; }
.vscroll .track { flex: 110; }
.vscroll .thumb::after { background: repeating-linear-gradient(#94acec 0 1px, #dce6ff 1px 2px); }
.hscroll { display: flex; height: 11px; background: #f6f6f2; }
.hscroll .thumb { flex: 322; height: 10px; }
.hscroll .track { flex: 124; }
.corner { width: 11px; background: #e4e1d0; }

.structure { margin-top: 4px; }
.head {
  display: flex;
  align-items: center;
  gap: 2px;
  height: 11px;
  padding: 0 4px 0 2px;
  background: #0a50dc;
  color: #fff;
}
.head svg { width: 7px; height: 7px; }
.head svg:first-of-type { margin-left: auto; }
.inactive { background: #7494dc; color: #e4ecff; }
.struct { height: 92px; border: 1px solid; border-color: #77756a #f4f3ea #f4f3ea #77756a; background: #e4e2d2; padding: 19px; border-left-width: 2px; }
.nodes { display: flex; gap: 12px; list-style: none; padding-left: 1px; }
.nodes li {
  position: relative;
  width: 13px;
  height: 13px;
  border-radius: 50%;
  background: #0404fa;
  color: #fff;
  font: bold 8px/13px "DejaVu Sans", sans-serif;
  text-align: center;
}
.nodes li + li::before { content: ""; position: absolute; right: 13px; top: 6px; width: 12px; height: 1px; background: #333; }
.nodes .end { background: #fc0808; }
.nodes .cur { background: #04fc04; color: #111; }
.nodes .x { background: #087878; }
.nodes li.green::before { background: #04fc04; }
sup { position: absolute; left: -7px; top: -7px; font: 6px/6px "Liberation Sans", sans-serif; color: #2020c0; }
.cur sup { background: #10c810; color: #052805; padding: 0 1px; }

.props { width: 148px; flex: none; display: flex; flex-direction: column; margin-right: 1px; background: #e6e3d3; padding-top: 2px; }
.ptool { display: flex; align-items: center; height: 15px; padding-left: 1px; border-bottom: 1px solid #f4f3ea; }
.ptool.tall { height: 16px; }
.ptool button { width: 14px; height: 14px; }
.psep { width: 1px; height: 11px; margin: 0 2px; background: #bcb9a8; flex: none; }
.editor { display: flex; height: 114px; border: 1px solid; border-left-width: 2px; border-color: #77756a #f4f3ea #f4f3ea #77756a; }
.text { flex: 1; padding: 2px 1px; background: #80fafa; font-size: 8px; line-height: 10px; border-left: 1px solid #e6e3d3; }
.escroll { width: 11px; display: flex; flex-direction: column; justify-content: space-between; align-items: center; padding: 2px 0; background: #efede4; color: #bab8ac; }
.escroll svg { width: 8px; height: 8px; }
.showin { display: flex; align-items: center; height: 18px; padding: 0 1px 0 2px; background: #c0d4f4; }
.showin label { width: 30px; }
.showin .combo { flex: 1; height: 12px; }
.showin .combo select { padding: 0 0 0 1px; }
.showin .combo span { width: 8px; }
.form { flex: 1; display: flex; flex-direction: column; padding: 2px 6px 0 1px; border-top: 1px solid #77756a; border-left: 1px solid #77756a; }
.checks { display: flex; height: 13px; align-items: center; }
.checks label { display: flex; align-items: center; gap: 2px; }
.checks label:nth-child(1) { width: 45px; }
.checks label:nth-child(2) { width: 48px; }
input[type=checkbox] { appearance: none; width: 8px; height: 8px; background: #fff; border: 1px solid; border-color: #77756a #f4f3ea #f4f3ea #77756a; }
.row { display: flex; align-items: center; height: 12px; }
.row > :first-child { width: 66px; }
.row > :last-child { flex: 1; min-width: 0; }
.row.app { margin-bottom: 1px; }
.row.mid { margin: 4px 0; }
input[type=text] { height: 12px; padding: 0 2px; background: #fff; border: 1px solid; border-color: #77756a #fff #fff #77756a; border-radius: 0; }
.acts { display: flex; align-items: center; height: 21px; border-bottom: 1px solid #aaa798; }
.acts button { width: 14px; height: 14px; }
.sunk { border: 1px solid; border-color: #aaa798 #fff #fff #aaa798; background: #f0eee6; }
.space { height: 54px; border-bottom: 1px solid #aaa798; }
.row.jump { margin-top: 2px; }
.status { display: flex; align-items: center; justify-content: flex-end; gap: 3px; height: 15px; padding-right: 1px; border-top: 1px solid #a8c4ea; background: #e8e5d5; }
.status span { margin-right: 4px; }
.status .sizer { width: 8px; height: 8px; }
```
